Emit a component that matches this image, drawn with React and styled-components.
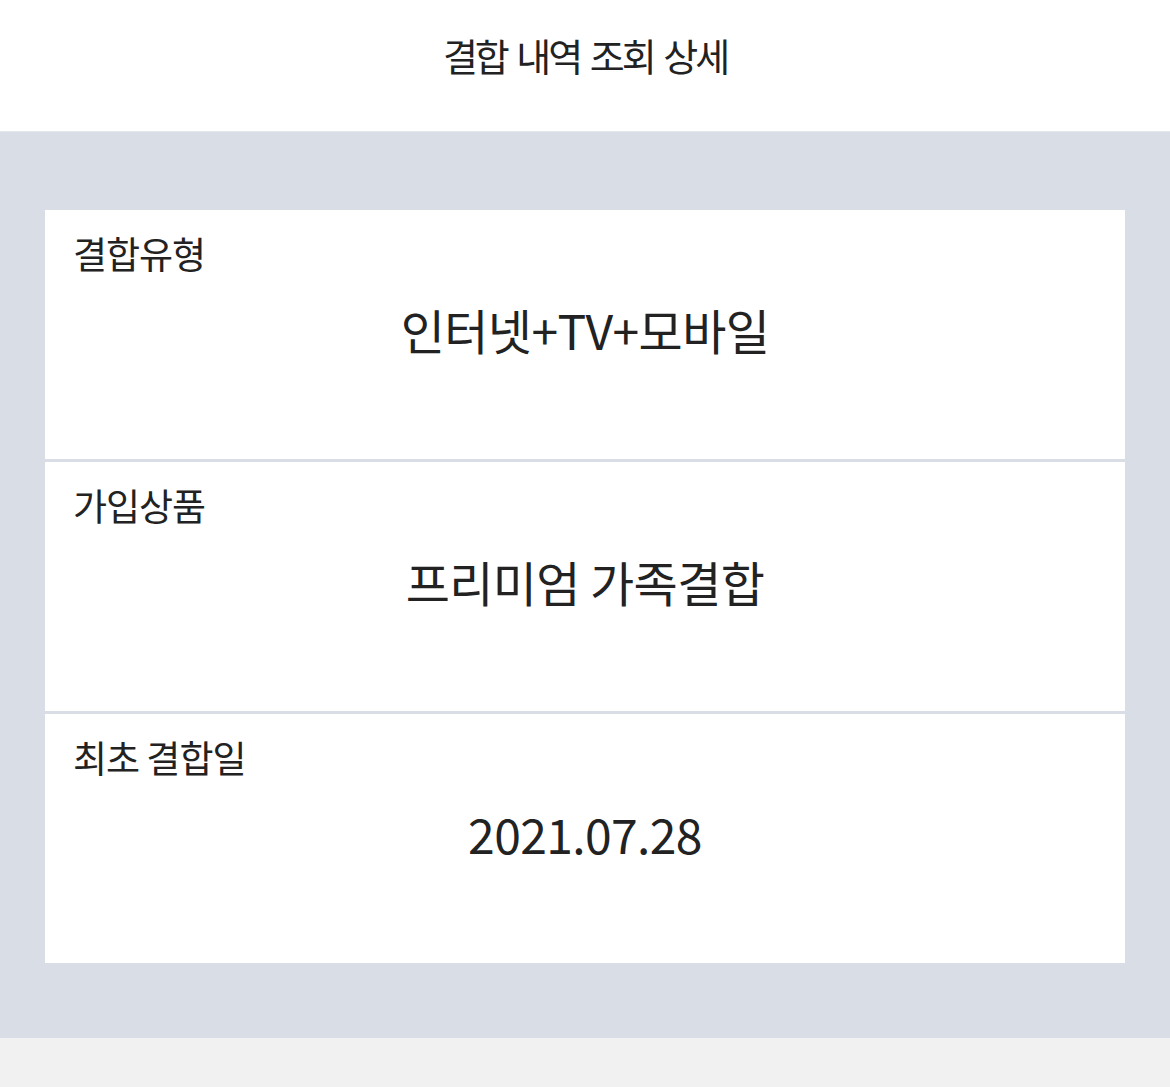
import React from 'react';
import styled, { createGlobalStyle } from 'styled-components';

const GlobalStyle = createGlobalStyle`
  html, body {
    margin: 0;
    padding: 0;
    background: #f1f1f1;
    font-family: "Noto Sans CJK KR", "Noto Sans", sans-serif;
    color: #222;
  }
`;

const Header = styled.header`
  height: 132px;
  display: flex;
  align-items: center;
  justify-content: center;
  background: #fff;
  border-bottom: 1px solid #e4e7ec;
  padding-bottom: 22px;
  box-sizing: border-box;
`;

const Title = styled.h1`
  margin: 0;
  font-size: 38px;
  font-weight: 400;
  letter-spacing: -3px;
  word-spacing: 4px;
  color: #222;
`;

const Body = styled.main`
  background: #d9dee6;
  padding: 78px 45px 75px;
`;

const List = styled.div`
  display: flex;
  flex-direction: column;
  gap: 3px;
`;

const Card = styled.section`
  height: 249px;
  box-sizing: border-box;
  background: #fff;
  padding: 22px 28px 0;
`;

const Label = styled.div`
  font-size: 37px;
  line-height: 42px;
  letter-spacing: -1px;
  color: #222;
`;

const Value = styled.div`
  margin-top: 28px;
  text-align: center;
  font-size: 48px;
  line-height: 54px;
  letter-spacing: -0.6px;
  color: #222;
`;

const items = [
  { label: '결합유형', value: '인터넷+TV+모바일' },
  { label: '가입상품', value: '프리미엄 가족결합' },
  { label: '최초 결합일', value: '2021.07.28' },
];

export default function App() {
  return (
    <>
      <GlobalStyle />
      <Header>
        <Title>결합 내역 조회 상세</Title>
      </Header>
      <Body>
        <List>
          {items.map((item) => (
            <Card key={item.label}>
              <Label>{item.label}</Label>
              <Value>{item.value}</Value>
            </Card>
          ))}
        </List>
      </Body>
    </>
  );
}
